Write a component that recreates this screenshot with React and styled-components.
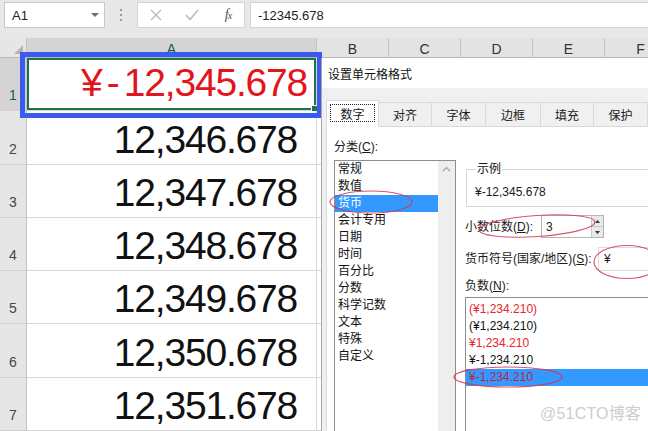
import React from 'react';
import styled, { createGlobalStyle } from 'styled-components';

const Global = createGlobalStyle`
  html, body { margin: 0; padding: 0; background: #fff; }
  body { font-family: "Liberation Sans", "Noto Sans CJK SC", sans-serif; }
  #root { width: 648px; height: 431px; }
`;

const Screen = styled.div`
  position: relative;
  width: 648px;
  height: 431px;
  overflow: hidden;
  background: #e8e8e8;
  display: flex;
  flex-direction: column;
`;

/* ---------- formula bar ---------- */
const TopBar = styled.div`
  height: 38px;
  flex: none;
  box-sizing: border-box;
  padding-top: 2px;
  display: flex;
  align-items: flex-start;
`;

const NameBox = styled.div`
  margin-left: 4px;
  width: 101px;
  height: 26px;
  box-sizing: border-box;
  background: #fff;
  border: 1px solid #c8c8c8;
  display: flex;
  align-items: center;
  justify-content: space-between;
  padding: 0 5px 0 7px;
  font-size: 13px;
  color: #222;
`;

const DropArrow = styled.span`
  width: 0;
  height: 0;
  border-left: 4px solid transparent;
  border-right: 4px solid transparent;
  border-top: 4px solid #707070;
`;

const Grip = styled.div`
  width: 32px;
  height: 26px;
  display: flex;
  flex-direction: column;
  align-items: center;
  justify-content: center;
  gap: 3px;
`;

const GripDot = styled.span`
  width: 2px;
  height: 2px;
  background: #9a9a9a;
`;

const FuncBox = styled.div`
  width: 108px;
  height: 26px;
  box-sizing: border-box;
  background: #fff;
  border: 1px solid #d4d4d4;
  display: grid;
  grid-template-columns: repeat(3, 36px);
  align-items: center;
  justify-items: center;
`;

const Fx = styled.span`
  font-family: "Liberation Serif", serif;
  font-style: italic;
  font-size: 14px;
  color: #505050;
  letter-spacing: -1px;
`;

const FormulaInput = styled.div`
  flex: 1;
  margin-left: 5px;
  height: 26px;
  box-sizing: border-box;
  background: #fff;
  border: 1px solid #d4d4d4;
  border-right: none;
  display: flex;
  align-items: center;
  padding-left: 7px;
  font-size: 13px;
  color: #222;
`;

/* ---------- sheet ---------- */
const Sheet = styled.div`
  display: grid;
  grid-template-columns: 27px 290px repeat(5, 72px);
  grid-template-rows: 20px repeat(7, 53.3px);
`;

const Corner = styled.div`
  position: relative;
  background: #e6e6e6;
  border-right: 1px solid #c4c4c4;
  border-bottom: 1px solid #b8b8b8;
  &::after {
    content: "";
    position: absolute;
    right: 3px;
    bottom: 3px;
    border-left: 9px solid transparent;
    border-bottom: 9px solid #b4b4b4;
  }
`;

const ColHeader = styled.div`
  background: ${p => (p.$selected ? '#d4d4d4' : '#e3e3e3')};
  color: ${p => (p.$selected ? '#1d5a38' : '#333')};
  border-right: 1px solid #c4c4c4;
  border-bottom: 1px solid #b8b8b8;
  display: flex;
  align-items: center;
  justify-content: center;
  font-size: 14px;
  padding-top: 2px;
  box-sizing: border-box;
`;

const RowHeader = styled.div`
  background: ${p => (p.$selected ? '#d4d4d4' : '#e6e6e6')};
  color: ${p => (p.$selected ? '#1d5a38' : '#444')};
  border-right: 1px solid #c4c4c4;
  border-bottom: 1px solid #cfcfcf;
  display: flex;
  align-items: flex-end;
  justify-content: center;
  font-size: 14px;
  line-height: 14px;
  padding-bottom: 8px;
  box-sizing: border-box;
`;

const Cell = styled.div`
  position: relative;
  background: #fff;
  border-right: 1px solid #d6d6d6;
  border-bottom: 1px solid #d6d6d6;
  box-sizing: border-box;
  display: flex;
  align-items: flex-end;
  justify-content: flex-end;
  padding: 0 ${p => (p.$selected ? 9 : 19)}px ${p => (p.$selected ? 8 : 5)}px 0;
  font-size: 39px;
  line-height: 1;
  letter-spacing: -1.2px;
  color: ${p => (p.$negative ? '#e3141b' : '#111')};
  white-space: nowrap;
  box-shadow: ${p => (p.$selected ? 'inset 0 0 0 2px #217346' : 'none')};
  ${p =>
    p.$selected &&
    `&::after {
      content: "";
      position: absolute;
      right: -2px;
      bottom: -2px;
      width: 5px;
      height: 5px;
      background: #217346;
      border: 1px solid #fff;
    }`}
`;

const Prefix = styled.span`
  letter-spacing: 4px;
`;

const SelectionFrame = styled.div`
  position: absolute;
  left: 20px;
  top: 52px;
  width: 302px;
  height: 66px;
  box-sizing: border-box;
  border: 5px solid #3b5bf0;
  pointer-events: none;
`;

/* ---------- dialog ---------- */
const Dialog = styled.div`
  position: absolute;
  left: 321px;
  top: 58px;
  width: 340px;
  height: 390px;
  background: #f0f0f0;
  border-left: 1px solid #a8a8a8;
  display: flex;
  flex-direction: column;
  font-size: 12px;
  color: #1a1a1a;
`;

const TitleBar = styled.div`
  height: 30px;
  flex: none;
  background: #fff;
  display: flex;
  align-items: center;
  padding-left: 6px;
  font-size: 12px;
  color: #111;
`;

const DialogBody = styled.div`
  flex: 1;
  display: flex;
  flex-direction: column;
  padding: 12px 0 0 4px;
`;

const TabStrip = styled.div`
  display: flex;
  align-items: flex-end;
  height: 27px;
  position: relative;
  z-index: 1;
`;

const Tab = styled.div`
  width: ${p => p.$w}px;
  height: ${p => (p.$active ? 27 : 25)}px;
  box-sizing: border-box;
  border: 1px solid #d9d9d9;
  border-left: ${p => (p.$first ? '1px solid #d9d9d9' : 'none')};
  border-bottom: ${p => (p.$active ? '1px solid #fff' : '1px solid #d9d9d9')};
  background: ${p => (p.$active ? '#fff' : '#f0f0f0')};
  display: flex;
  align-items: center;
  justify-content: center;
  padding: ${p => (p.$active ? '3px 3px 4px' : '0')};
  font-size: 12px;
`;

const FocusRect = styled.span`
  flex: 1;
  align-self: stretch;
  display: flex;
  align-items: center;
  justify-content: center;
  border: 1px dotted #222;
`;

const TabPage = styled.div`
  flex: 1;
  margin-top: -1px;
  background: #fff;
  border: 1px solid #d9d9d9;
  border-right: none;
  padding: 12px 0 0 7px;
  display: flex;
  gap: 9px;
`;

const LeftCol = styled.div`
  width: 122px;
  flex: none;
  display: flex;
  flex-direction: column;
`;

const FieldLabel = styled.div`
  height: 16px;
  line-height: 16px;
  font-size: 12px;
  white-space: nowrap;
  flex: none;
  width: ${p => (p.$w ? `${p.$w}px` : 'auto')};
  margin-top: ${p => p.$mt || 0}px;
`;

const ListBox = styled.div`
  margin-top: 5px;
  height: 320px;
  box-sizing: border-box;
  border: 1px solid #8a8f96;
  background: #fff;
  display: flex;
`;

const ListItems = styled.div`
  flex: 1;
  display: flex;
  flex-direction: column;
`;

const ListItem = styled.div`
  height: 17px;
  line-height: 17px;
  padding-left: ${p => p.$pad || 3}px;
  font-size: 12px;
  white-space: nowrap;
  background: ${p => (p.$selected ? '#3399ff' : 'transparent')};
  color: ${p => (p.$selected && !p.$red ? '#fff' : p.$red ? (p.$selected ? '#c8203c' : '#e8242a') : '#111')};
`;

const ScrollTrack = styled.div`
  width: 17px;
  flex: none;
  background: #eeeeee;
  display: flex;
  justify-content: center;
  padding-top: 5px;
  box-sizing: border-box;
`;

const RightCol = styled.div`
  flex: 1;
  display: flex;
  flex-direction: column;
`;

const Group = styled.fieldset`
  margin: 23px 0 0 1px;
  width: 200px;
  box-sizing: border-box;
  border: 1px solid #d5d5d5;
  padding: 9px 0 7px 8px;
`;

const Legend = styled.legend`
  font-size: 12px;
  line-height: 14px;
  padding: 0 1px;
  margin-left: 1px;
  color: #111;
`;

const SampleText = styled.div`
  font-size: 12px;
  line-height: 14px;
`;

const FieldRow = styled.div`
  display: flex;
  align-items: center;
  height: ${p => p.$h}px;
  margin-top: ${p => p.$mt}px;
`;

const SpinBox = styled.div`
  width: 63px;
  height: 23px;
  box-sizing: border-box;
  border: 1px solid #b5b5b5;
  display: flex;
  align-items: center;
`;

const SpinValue = styled.span`
  flex: 1;
  padding-left: 4px;
  font-size: 12px;
`;

const SpinButtons = styled.div`
  width: 11px;
  align-self: stretch;
  display: flex;
  flex-direction: column;
  border-left: 1px solid #c8c8c8;
`;

const SpinButton = styled.div`
  flex: 1;
  background: #e9e9e9;
  border-bottom: ${p => (p.$top ? '1px solid #c8c8c8' : 'none')};
  display: flex;
  align-items: center;
  justify-content: center;
`;

const Combo = styled.div`
  width: 100px;
  height: 24px;
  box-sizing: border-box;
  border: 1px solid #dcdcdc;
  display: flex;
  align-items: center;
  padding-left: 5px;
  font-size: 12px;
`;

const NegList = styled.div`
  margin-top: 3px;
  width: 200px;
  height: 160px;
  box-sizing: border-box;
  border: 1px solid #8a8f96;
  background: #fff;
  padding-top: 3px;
  display: flex;
  flex-direction: column;
`;

const Annotations = styled.svg`
  position: absolute;
  left: 0;
  top: 0;
  width: 648px;
  height: 431px;
  pointer-events: none;
`;

const Watermark = styled.div`
  position: absolute;
  left: 540px;
  top: 404px;
  font-size: 16px;
  line-height: 20px;
  color: #cdcdcd;
  letter-spacing: 0.2px;
`;

const U = styled.span`
  text-decoration: underline;
`;

const rows = [
  null,
  '12,346.678',
  '12,347.678',
  '12,348.678',
  '12,349.678',
  '12,350.678',
  '12,351.678',
];

const tabs = [
  { label: '数字', w: 53 },
  { label: '对齐', w: 53 },
  { label: '字体', w: 54 },
  { label: '边框', w: 55 },
  { label: '填充', w: 53 },
  { label: '保护', w: 54 },
];

const categories = ['常规', '数值', '货币', '会计专用', '日期', '时间', '百分比', '分数', '科学记数', '文本', '特殊', '自定义'];

const negatives = [
  { t: '(¥1,234.210)', red: true },
  { t: '(¥1,234.210)', red: false },
  { t: '¥1,234.210', red: true },
  { t: '¥-1,234.210', red: false },
  { t: '¥-1,234.210', red: true, selected: true },
];

export default function App() {
  return (
    <>
      <Global />
      <Screen>
        <TopBar>
          <NameBox>
            <span>A1</span>
            <DropArrow />
          </NameBox>
          <Grip>
            <GripDot />
            <GripDot />
            <GripDot />
          </Grip>
          <FuncBox>
            <svg width="12" height="12" viewBox="0 0 12 12">
              <path d="M1 1 L11 11 M11 1 L1 11" stroke="#b9b9b9" strokeWidth="1.4" fill="none" />
            </svg>
            <svg width="14" height="12" viewBox="0 0 14 12">
              <path d="M1 6 L5 10.5 L13 1" stroke="#b9b9b9" strokeWidth="1.5" fill="none" />
            </svg>
            <Fx>
              f<sub style={{ fontSize: '10px', verticalAlign: 'baseline' }}>x</sub>
            </Fx>
          </FuncBox>
          <FormulaInput>-12345.678</FormulaInput>
        </TopBar>

        <Sheet>
          <Corner />
          <ColHeader $selected>A</ColHeader>
          <ColHeader>B</ColHeader>
          <ColHeader>C</ColHeader>
          <ColHeader>D</ColHeader>
          <ColHeader>E</ColHeader>
          <ColHeader>F</ColHeader>
          {rows.map((v, i) => (
            <React.Fragment key={i}>
              <RowHeader $selected={i === 0}>{i + 1}</RowHeader>
              {i === 0 ? (
                <Cell $selected $negative>
                  <Prefix>¥-</Prefix>12,345.678
                </Cell>
              ) : (
                <Cell>{v}</Cell>
              )}
              <Cell />
              <Cell />
              <Cell />
              <Cell />
              <Cell />
            </React.Fragment>
          ))}
        </Sheet>

        <SelectionFrame />

        <Dialog>
          <TitleBar>设置单元格格式</TitleBar>
          <DialogBody>
            <TabStrip>
              {tabs.map((t, i) => (
                <Tab key={t.label} $w={t.w} $active={i === 0} $first={i === 0}>
                  {i === 0 ? <FocusRect>{t.label}</FocusRect> : t.label}
                </Tab>
              ))}
            </TabStrip>
            <TabPage>
              <LeftCol>
                <FieldLabel>
                  分类(<U>C</U>):
                </FieldLabel>
                <ListBox>
                  <ListItems>
                    {categories.map(c => (
                      <ListItem key={c} $selected={c === '货币'}>
                        {c}
                      </ListItem>
                    ))}
                  </ListItems>
                  <ScrollTrack>
                    <svg width="9" height="6" viewBox="0 0 9 6">
                      <path d="M1 5 L4.5 1.5 L8 5" stroke="#a6a6a6" strokeWidth="1.2" fill="none" />
                    </svg>
                  </ScrollTrack>
                </ListBox>
              </LeftCol>
              <RightCol>
                <Group>
                  <Legend>示例</Legend>
                  <SampleText>¥-12,345.678</SampleText>
                </Group>
                <FieldRow $h={23} $mt={8}>
                  <FieldLabel $w={76}>
                    小数位数(<U>D</U>):
                  </FieldLabel>
                  <SpinBox>
                    <SpinValue>3</SpinValue>
                    <SpinButtons>
                      <SpinButton $top>
                        <svg width="5" height="3" viewBox="0 0 5 3">
                          <path d="M0 3 L2.5 0 L5 3 Z" fill="#333" />
                        </svg>
                      </SpinButton>
                      <SpinButton>
                        <svg width="5" height="3" viewBox="0 0 5 3">
                          <path d="M0 0 L2.5 3 L5 0 Z" fill="#333" />
                        </svg>
                      </SpinButton>
                    </SpinButtons>
                  </SpinBox>
                </FieldRow>
                <FieldRow $h={24} $mt={9}>
                  <FieldLabel $w={133}>
                    货币符号(国家/地区)(<U>S</U>):
                  </FieldLabel>
                  <Combo>¥</Combo>
                </FieldRow>
                <FieldLabel $mt={7}>
                  负数(<U>N</U>):
                </FieldLabel>
                <NegList>
                  {negatives.map((n, i) => (
                    <ListItem key={i} $pad={3} $red={n.red} $selected={n.selected}>
                      {n.t}
                    </ListItem>
                  ))}
                </NegList>
              </RightCol>
            </TabPage>
          </DialogBody>
        </Dialog>

        <Annotations viewBox="0 0 648 431">
          <g fill="none" stroke="#d2384e" strokeWidth="1.2" opacity="0.85">
            <ellipse cx="371" cy="202" rx="41" ry="11" />
            <ellipse cx="537" cy="226" rx="58" ry="10.5" transform="rotate(-4 537 226)" />
            <ellipse cx="627" cy="262" rx="33" ry="16.5" />
            <ellipse cx="508" cy="377" rx="54" ry="10" />
          </g>
        </Annotations>

        <Watermark>@51CTO博客</Watermark>
      </Screen>
    </>
  );
}
